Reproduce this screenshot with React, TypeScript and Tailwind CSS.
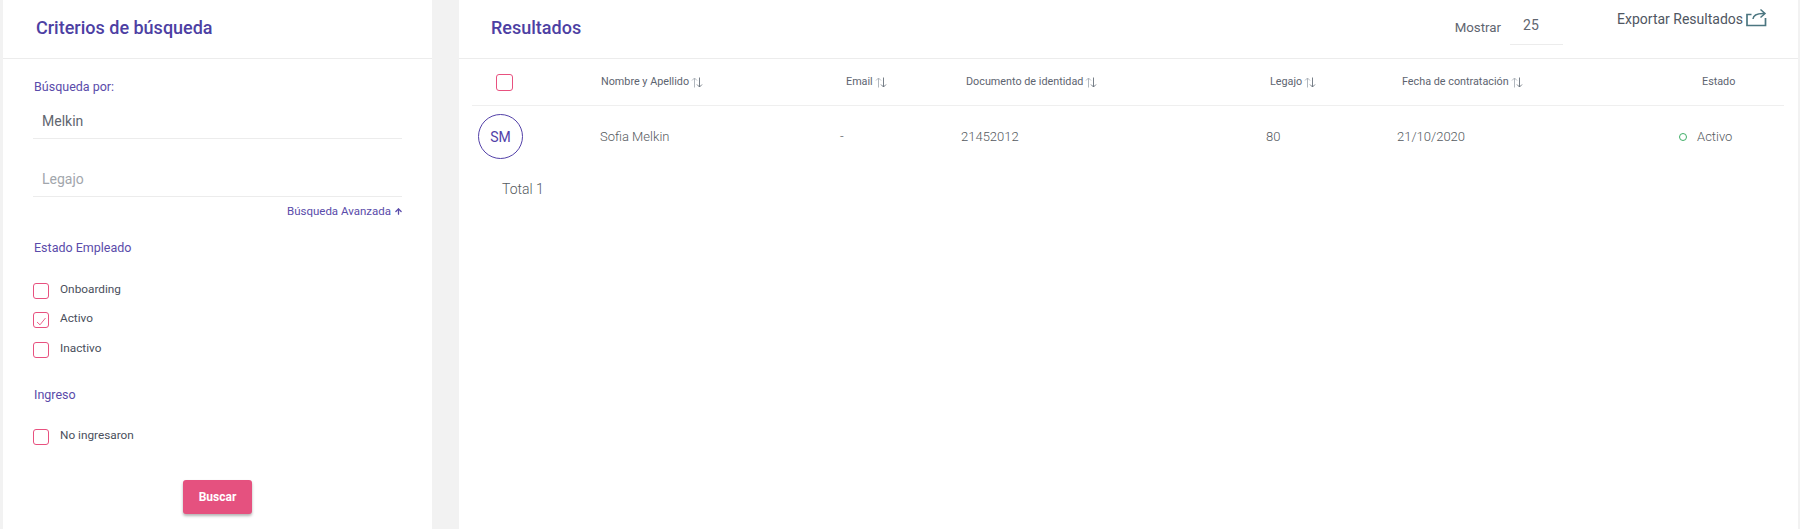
import React from 'react';
import { ArrowUp } from 'lucide-react';

const SortIcon = () => (
  <svg width="12" height="11" viewBox="0 0 12 11" fill="none" className="ml-[2px] shrink-0">
    <path d="M3.5 10.5V1M1 3.5 3.5 1 6 3.5" stroke="#a9b0b8" strokeWidth="0.9" />
    <path d="M8.5 .5V10M6 7.5l2.5 2.5L11 7.5" stroke="#69727c" strokeWidth="0.9" />
  </svg>
);

const ExportIcon = () => (
  <svg width="21" height="19" viewBox="0 0 21 19" fill="none" className="ml-[3px] mt-[-2px]">
    <path d="M5.5 6.5H1v11h18.5V10" stroke="#4b7680" strokeWidth="1.7" />
    <path d="M7 11c.3-3.8 3-5.6 11-5.4M14.5 1.5l4.5 4-4.5 4" stroke="#4b7680" strokeWidth="1.5" />
  </svg>
);

const Checkbox = ({ checked = false }: { checked?: boolean }) => (
  <span className="w-4 h-4 rounded-[3px] border border-[#e8517f] flex items-center justify-center shrink-0 bg-white">
    {checked && (
      <svg width="12" height="12" viewBox="0 0 12 12" fill="none">
        <path d="M2 8 5 10.8 10.5 4" stroke="#e8517f" strokeWidth="0.9" />
      </svg>
    )}
  </span>
);

const CheckRow = ({ label, checked, className }: { label: string; checked?: boolean; className?: string }) => (
  <div className={`flex items-start gap-[11px] text-[11.8px] text-[#4a4f5c] ${className ?? ''}`}>
    <Checkbox checked={checked} />
    <span className="leading-[14px] mt-[-1px]">{label}</span>
  </div>
);

const columns = 'grid grid-cols-[129px_245px_120px_304px_132px_277px_1fr]';

const HeadCell = ({ label, sort = true, className }: { label: string; sort?: boolean; className?: string }) => (
  <div className={`flex items-center text-[10.8px] text-[#5d6470] ${className ?? ''}`}>
    {label}
    {sort && <SortIcon />}
  </div>
);

export default function App() {
  return (
    <div className="flex h-[529px] overflow-hidden bg-[#f2f2f2] pl-[3px] gap-[27px] font-['Roboto',sans-serif]">
      {/* Search criteria */}
      <aside className="w-[429px] h-full bg-white shrink-0">
        <div className="h-[59px] border-b border-[#ececec] pl-[33px] flex items-center">
          <h2 className="text-lg font-medium text-[#4d3fa3] mt-[-2px]">Criterios de búsqueda</h2>
        </div>
        <div className="pl-[30px] pr-[30px] pt-[20px]">
          <label className="block text-[12.5px] leading-4 pl-[1px] text-[#5a4baa]">Búsqueda por:</label>
          <div className="h-[37px] mt-[7px] border-b border-[#ececec] pl-[9px] pt-[9px] text-sm leading-[20px] text-[#5f6670]">Melkin</div>
          <div className="h-[58px] border-b border-[#ececec] pl-[9px] pt-[30px] text-sm leading-[20px] text-[#a2a6ac]">Legajo</div>
          <div className="flex items-center justify-end mt-[6px] mr-[-1px] text-[11.5px] leading-4 text-[#5a4baa]">
            Búsqueda Avanzada
            <ArrowUp size={9} strokeWidth={3.5} className="ml-[3px]" />
          </div>
          <div className="mt-[21px] text-[12.5px] leading-4 pl-[1px] text-[#5a4baa]">Estado Empleado</div>
          <CheckRow label="Onboarding" className="mt-[27px]" />
          <CheckRow label="Activo" checked className="mt-[13px]" />
          <CheckRow label="Inactivo" className="mt-[14px]" />
          <div className="mt-[29px] text-[12.5px] leading-4 pl-[1px] text-[#5a4baa]">Ingreso</div>
          <CheckRow label="No ingresaron" className="mt-[26px]" />
          <div className="flex mt-[35px] pl-[150px]">
            <button className="w-[69px] h-[34px] rounded-[3px] bg-[#e5517f] text-white text-xs font-bold shadow-[0_2px_3px_rgba(0,0,0,0.3)]">
              Buscar
            </button>
          </div>
        </div>
      </aside>

      {/* Results */}
      <main className="w-[1339px] h-full bg-white shrink-0">
        <div className="h-[59px] border-b border-[#ececec] pl-[32px] flex items-start">
          <h2 className="text-lg font-medium text-[#4d3fa3] mt-[17px] leading-[22px]">Resultados</h2>
          <span className="ml-auto mt-[20px] text-[13.3px] leading-4 text-[#5f6670]">Mostrar</span>
          <span className="ml-[9px] mt-[8px] w-[53px] h-[37px] border-b border-[#ececec] pl-[13px] pt-[9px] text-sm leading-4 text-[#5f6670]">25</span>
          <div className="ml-[54px] mr-[31px] mt-[10px] flex items-center text-sm leading-4 text-[#4f5662]">
            Exportar Resultados
            <ExportIcon />
          </div>
        </div>
        <div className="ml-[13px] mr-[14px]">
          <div className={`${columns} h-[47px] border-b border-[#efefef] items-center`}>
            <div className="pl-[24px]">
              <span className="block w-[17px] h-[17px] rounded-[3px] border border-[#e8517f]" />
            </div>
            <HeadCell label="Nombre y Apellido" />
            <HeadCell label="Email" />
            <HeadCell label="Documento de identidad" />
            <HeadCell label="Legajo" />
            <HeadCell label="Fecha de contratación" />
            <HeadCell label="Estado" sort={false} className="pl-[23px]" />
          </div>
          <div className={`${columns} h-[61px] items-center text-[13px] font-light text-[#555a60]`}>
            <div className="pl-[6px]">
              <span className="w-[45px] h-[45px] rounded-full border border-[#5341a8] flex items-center justify-center text-sm font-normal text-[#5341a8]">SM</span>
            </div>
            <div className="ml-[-1px]">Sofia Melkin</div>
            <div className="ml-[-6px]">-</div>
            <div className="ml-[-5px]">21452012</div>
            <div className="ml-[-4px]">80</div>
            <div className="ml-[-5px]">21/10/2020</div>
            <div className="flex items-center">
              <span className="w-2 h-2 rounded-full border border-[#3fae67]" />
              <span className="ml-[10px]">Activo</span>
            </div>
          </div>
          <div className="pl-[30px] text-sm leading-4 mt-[14px] font-light text-[#555a60]">Total 1</div>
        </div>
      </main>
    </div>
  );
}
